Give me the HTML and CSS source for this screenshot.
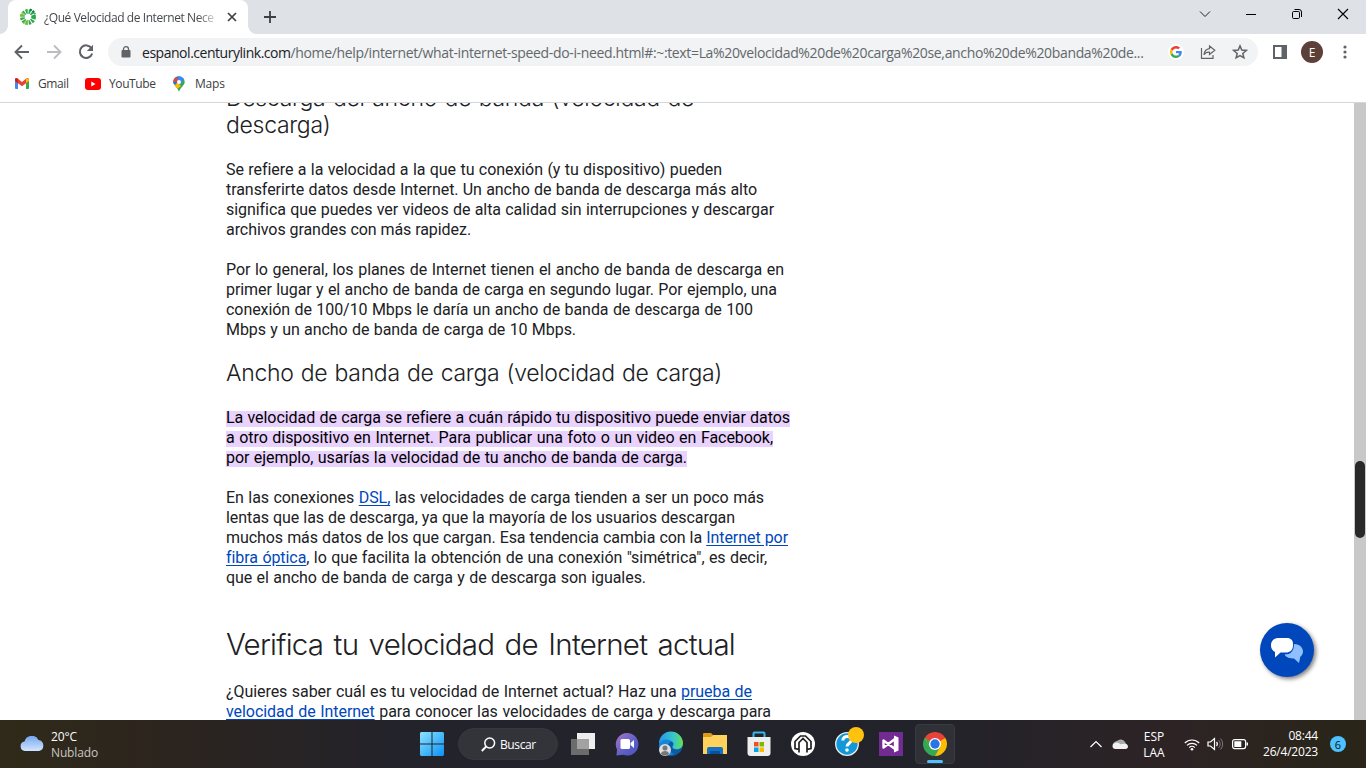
FILE: index.html
```html
<!DOCTYPE html>
<html lang="es">
<head>
<meta charset="utf-8">
<title>¿Qué Velocidad de Internet Necesito?</title>
<link rel="stylesheet" href="styles.css">
</head>
<body>
<div class="tabstrip">
  <div class="tab">
    <svg class="favicon" width="18" height="18" viewBox="-9 -9 18 18"><circle r="5.6" fill="none" stroke="#2aa84a" stroke-width="4.6" stroke-dasharray="2 .93"/><path d="M-8 0A8 8 0 0 1-5.500-5.700L-3-3.400A4 4 0 0 0-4 0zM0 8a8 8 0 0 1-5.400-2.200L-3 3.200A4 4 0 0 0 0 4z" fill="#8dc63f" opacity=".65"/><path d="M2-7.500A8 8 0 0 1 7-3" stroke="#008542" stroke-width="2" stroke-dasharray="2 1" fill="none"/></svg>
    <span class="tab-title">¿Qué Velocidad de Internet Nece</span>
    <svg class="tab-close" width="10" height="10" viewBox="0 0 10 10"><path d="M1 1l8 8M9 1L1 9" stroke="#3c4043" stroke-width="1.7"/></svg>
  </div>
  <svg class="new-tab" width="12" height="12" viewBox="0 0 12 12"><path d="M6 0v12M0 6h12" stroke="#3c4043" stroke-width="1.8"/></svg>
  <div class="window-buttons">
    <svg width="12" height="12" viewBox="0 0 12 12"><path d="M1 3.5l5 5 5-5" fill="none" stroke="#222"/></svg>
    <svg width="12" height="12" viewBox="0 0 12 12"><path d="M1 6.5h10" stroke="#000"/></svg>
    <svg width="12" height="12" viewBox="0 0 12 12"><rect x="1.5" y="3.5" width="7" height="7" rx="1.2" fill="none" stroke="#000"/><path d="M3.5 1.5H8a2.5 2.5 0 0 1 2.5 2.5v5" fill="none" stroke="#000"/></svg>
    <svg width="12" height="12" viewBox="0 0 12 12"><path d="M1 1l10 10M11 1L1 11" stroke="#000" stroke-width="1.1"/></svg>
  </div>
</div>
<div class="toolbar">
  <svg class="nav back" width="16" height="16" viewBox="0 0 16 16"><path d="M15 8H2M8 1.5L1.5 8 8 14.5" fill="none" stroke="#5f6368" stroke-width="1.9"/></svg>
  <svg class="nav forward" width="16" height="16" viewBox="0 0 16 16"><path d="M1 8h13M8 1.5L14.5 8 8 14.5" fill="none" stroke="#bbbdc0" stroke-width="1.9"/></svg>
  <svg class="nav reload" width="16" height="16" viewBox="0 0 16 16"><path d="M13.5 4.3A6.3 6.3 0 1 0 14.2 9.5" fill="none" stroke="#5f6368" stroke-width="2"/><path d="M15 .8V7H8.8z" fill="#5f6368"/></svg>
  <div class="omnibox">
    <svg class="lock" width="10" height="12" viewBox="0 0 10 12"><rect x=".5" y="4" width="9" height="7.5" rx="1" fill="#5f6368"/><path d="M2.5 4.5V3a2.5 2.3 0 0 1 5 0v1.5" fill="none" stroke="#5f6368" stroke-width="1.3"/></svg>
    <span class="url"><b>espanol.centurylink.com</b>/home/help/internet/what-internet-speed-do-i-need.html#:~:text=La%20velocidad%20de%20carga%20se,ancho%20de%20banda%20de...</span>
    <span class="google"><svg width="12" height="12" viewBox="0 0 48 48"><path fill="#ea4335" d="M24 9.500c3.540 0 6.710 1.220 9.210 3.600l6.850-6.850C35.900 2.380 30.470 0 24 0 14.620 0 6.510 5.380 2.560 13.220l7.980 6.190C12.430 13.720 17.740 9.500 24 9.500z"/><path fill="#4285f4" d="M46.980 24.550c0-1.570-.15-3.090-.38-4.550H24v9.020h12.940c-.58 2.960-2.260 5.480-4.780 7.180l7.730 6c4.510-4.180 7.090-10.360 7.090-17.650z"/><path fill="#fbbc05" d="M10.530 28.590A14.500 14.500 0 0 1 10.530 19.410L2.550 13.220A24 24 0 0 0 2.560 34.780z"/><path fill="#34a853" d="M24 48c6.480 0 11.930-2.130 15.890-5.810l-7.730-6c-2.150 1.450-4.920 2.300-8.160 2.300-6.260 0-11.570-4.220-13.470-9.910l-7.980 6.190C6.510 42.620 14.620 48 24 48z"/></svg></span>
    <svg class="share" width="16" height="16" viewBox="0 0 16 16"><path d="M1.500 4v10.300h11.500V11M9.500 2l5.300 4.300-5.300 4.200V8.200C7 8 5.200 8.800 4 10.800 4.300 7.200 6 5 9.500 4.600z" fill="none" stroke="#5f6368" stroke-width="1.200"/></svg>
    <svg class="star" width="16" height="16" viewBox="0 0 16 16"><path d="M8 1.900l1.750 4.200 4.450.35-3.400 2.950 1.050 4.400L8 11.500l-3.850 2.300 1.050-4.400L1.800 6.450l4.450-.35z" fill="none" stroke="#5f6368" stroke-width="1.500"/></svg>
  </div>
  <svg class="panel-icon" width="14" height="14" viewBox="0 0 14 14"><path d="M1 1h12v12H1z" fill="none" stroke="#5f6368" stroke-width="2"/><path d="M8.500 0H14v14H8.500z" fill="#5f6368"/></svg>
  <span class="avatar">E</span>
  <svg class="more" width="4" height="14" viewBox="0 0 4 14"><g fill="#5f6368"><circle cx="2" cy="2" r="1.600"/><circle cx="2" cy="7" r="1.600"/><circle cx="2" cy="12" r="1.600"/></g></svg>
</div>
<div class="bookmarks">
  <svg width="14" height="11" viewBox="0 0 14 11"><path d="M0 1.500h3V11H1a1 1 0 0 1-1-1z" fill="#4285f4"/><path d="M11 1.500h3V10a1 1 0 0 1-1 1h-2z" fill="#34a853"/><path d="M0 1.500C0 .2 1.600-.4 2.700.6L7 4l4.300-3.400C12.400-.4 14 .2 14 1.500V3L7 8.200 0 3z" fill="#ea4335"/><path d="M11 .9C12.400-.4 14 .2 14 1.500V3l-3 2.300z" fill="#fbbc04"/><path d="M0 1.500C0 .2 1.600-.4 3 .9v4.400L0 3z" fill="#c5221f"/></svg>
  <span class="gmail">Gmail</span>
  <svg width="16" height="12" viewBox="0 0 16 12"><rect width="16" height="12" rx="3" fill="red"/><path d="M6.300 3.500v5L10.500 6z" fill="#fff"/></svg>
  <span class="youtube">YouTube</span>
  <svg width="12" height="16" viewBox="0 0 12 16"><clipPath id="pin"><path d="M6 .3A5.700 5.700 0 0 0 .3 6C.3 9.500 4.500 11 6 15.800 7.500 11 11.700 9.500 11.700 6A5.700 5.700 0 0 0 6 .3z"/></clipPath><g clip-path="url(#pin)"><path fill="#34a853" d="M0 0h12v16H0z"/><path fill="#fbbc04" d="M0 5l5 2 3 3-5 4-3-3z"/><path fill="#1a73e8" d="M0 0h5l1 5-4 4L0 7z"/><path fill="#ea4335" d="M0 0v5l4 2 3-4z"/><path fill="#4285f4" d="M5 0h7v3L7 8 4 6z"/></g><circle cx="6" cy="6" r="2" fill="#fff"/></svg>
  <span class="maps">Maps</span>
</div>
<div class="viewport">
  <main class="article">
    <h3 class="clipped"><span class="line" style="width:468px">Descarga del ancho de banda (velocidad de</span><span class="line" style="width:106px">descarga)</span></h3>
    <p><span class="line" style="width:496px">Se refiere a la velocidad a la que tu conexión (y tu dispositivo) pueden</span><span class="line" style="width:531px">transferirte datos desde Internet. Un ancho de banda de descarga más alto</span><span class="line" style="width:548px">significa que puedes ver videos de alta calidad sin interrupciones y descargar</span><span class="line" style="width:245px">archivos grandes con más rapidez.</span></p>
    <p><span class="line" style="width:558px">Por lo general, los planes de Internet tienen el ancho de banda de descarga en</span><span class="line" style="width:551px">primer lugar y el ancho de banda de carga en segundo lugar. Por ejemplo, una</span><span class="line" style="width:527px">conexión de 100/10 Mbps le daría un ancho de banda de descarga de 100</span><span class="line" style="width:350px">Mbps y un ancho de banda de carga de 10 Mbps.</span></p>
    <h3><span class="line" style="width:496px">Ancho de banda de carga (velocidad de carga)</span></h3>
    <p class="marked"><span class="line" style="width:564px">La velocidad de carga se refiere a cuán rápido tu dispositivo puede enviar datos</span><span class="line" style="width:547px">a otro dispositivo en Internet. Para publicar una foto o un video en Facebook,</span><span class="line" style="width:461px">por ejemplo, usarías la velocidad de tu ancho de banda de carga.</span></p>
    <p><span class="line" style="width:538px">En las conexiones <a>DSL,</a> las velocidades de carga tienden a ser un poco más</span><span class="line" style="width:509px">lentas que las de descarga, ya que la mayoría de los usuarios descargan</span><span class="line" style="width:562px">muchos más datos de los que cargan. Esa tendencia cambia con la <a>Internet por</a></span><span class="line" style="width:541px"><a>fibra óptica</a>, lo que facilita la obtención de una conexión "simétrica", es decir,</span><span class="line" style="width:420px">que el ancho de banda de carga y de descarga son iguales.</span></p>
    <h2><span class="line" style="width:509px">Verifica tu velocidad de Internet actual</span></h2>
    <p><span class="line" style="width:526px">¿Quieres saber cuál es tu velocidad de Internet actual? Haz una <a>prueba de</a></span><span class="line" style="width:545px"><a>velocidad de Internet</a> para conocer las velocidades de carga y descarga para</span></p>
  </main>
  <div class="chat"><svg width="34" height="26" viewBox="0 0 34 26"><path d="M24 7c5 0 9 3 9 7.500 0 2.200-1 4-2.700 5.300L29 26l-5-4.500c-4 0-8-1-9.500-4 6 0 9.500-3 9.500-10.500z" fill="#8ebfff"/><path d="M9 1h8c4 0 6 2.500 6 6v1.500c0 4.500-3 7-7 7h-5.500L5 20.500V15C2.300 13.500 1 11.500 1 8.500 1 3.500 4 1 9 1z" fill="#fff"/></svg></div>
  <div class="scrollbar"><div class="thumb"></div></div>
</div>
<div class="taskbar">
  <div class="weather">
    <svg width="25" height="16" viewBox="0 0 25 16"><defs><linearGradient id="cloud" x2="0" y2="1"><stop stop-color="#72a5ef"/><stop offset="1" stop-color="#d5e5ff"/></linearGradient></defs><path d="M5 15a4.800 4.800 0 0 1-.5-9.500A7.500 7.500 0 0 1 18.500 4 5.600 5.600 0 0 1 19 15z" fill="url(#cloud)"/><path d="M9 6c3 0 4 1 6 3" stroke="#a9c9fb" fill="none"/></svg>
    <div class="weather-text"><span>20°C</span><span class="dim">Nublado</span></div>
  </div>
  <div class="apps">
    <svg width="24" height="24" viewBox="0 0 24 24"><defs><linearGradient id="win" x2="1" y2="1"><stop stop-color="#8be4ff"/><stop offset="1" stop-color="#0b91f5"/></linearGradient></defs><path d="M1 0h10.500v11.500H0V1zM12.500 0H23l1 1v10.500H12.500zM0 12.500h11.500V24H1l-1-1zM12.500 12.500H24V23l-1 1H12.500z" fill="url(#win)"/></svg>
    <div class="search"><svg width="15" height="15" viewBox="0 0 15 15"><circle cx="8.700" cy="6" r="4.900" fill="none" stroke="#fff" stroke-width="1.500"/><path d="M5.200 9.500L.8 14" stroke="#fff" stroke-width="1.900"/></svg><span>Buscar</span></div>
    <svg class="app" width="24" height="24" viewBox="0 0 24 24"><path d="M6 1h18v16H6z" fill="#eee"/><path d="M0 7h18v16H0z" fill="#6c6c6c"/><path d="M6 7h12v10H6z" fill="#a2a2a2"/></svg>
    <svg class="app" width="24" height="24" viewBox="0 0 24 24"><defs><linearGradient id="teams" x2="1" y2="1"><stop stop-color="#a875c2"/><stop offset=".6" stop-color="#5b5fc7"/><stop offset="1" stop-color="#4c50bd"/></linearGradient></defs><path d="M12 1a11.300 11.300 0 1 1-4 21.800L1.500 23.500 2 17.500A11.300 11.300 0 0 1 12 1z" fill="url(#teams)"/><rect x="5.500" y="7" width="9.500" height="10" rx="1.500" fill="#fff"/><path d="M15.500 11L19 8v8l-3.500-3z" fill="#fff"/></svg>
    <svg class="app edge" width="26" height="26" viewBox="0 0 26 26"><defs><linearGradient id="edge"><stop stop-color="#2796e8"/><stop offset=".6" stop-color="#36c6cc"/><stop offset="1" stop-color="#67e052"/></linearGradient></defs><circle cx="13" cy="13" r="12" fill="#0c5ba8"/><path d="M1 13A12 12 0 0 1 25 12c0 5-4 7-8 6-3-.8-3-2-1.500-4.500C16 9 6 7 1 13z" fill="url(#edge)"/><path d="M1 14C3 8 11 7 13 11c-4 1-4 9 3 12C8 27 1 21 1 14z" fill="#1685d9"/><circle cx="7" cy="19" r="6" fill="#ddd"/><circle cx="7" cy="17" r="2.500" fill="#777"/><path d="M3 23c0-4 8-4 8 0-2 2-6 2-8 0z" fill="#777"/></svg>
    <svg class="app" width="24" height="24" viewBox="0 0 24 24"><path d="M0 2q0-1 1-1h7l2 2-2 4H0z" fill="#dc9b17"/><path d="M0 5h8l2-2h14v19H0z" fill="#ffd35b"/><path d="M4 22v-5q0-2 2-2h12q2 0 2 2v5z" fill="#1472c4"/><path d="M7 19h10v3H7z" fill="#0b4f9d"/></svg>
    <svg class="app" width="24" height="26" viewBox="0 0 24 26"><path d="M6.500 8V2.500q0-1 1-1h9q1 0 1 1V8" fill="none" stroke="#36b7ec" stroke-width="2"/><path d="M.5 6h23v16q0 3-3 3h-17q-3 0-3-3z" fill="#eee"/><path d="M7 11h4.500v4.500H7z" fill="#f25022"/><path d="M12.500 11H17v4.500h-4.500z" fill="#7fba00"/><path d="M7 16.500h4.500V21H7z" fill="#00a4ef"/><path d="M12.500 16.500H17V21h-4.500z" fill="#ffb900"/></svg>
    <svg class="app" width="24" height="24" viewBox="0 0 24 24"><circle cx="12" cy="12" r="12" fill="#fff"/><path d="M8 20.500v-3l-4-1V9.500L9.500 4h5L20 9.500v7l-4 1v3M8 18v-7.500l4-4 4 4V18" fill="none" stroke="#222" stroke-width="1.700"/></svg>
    <svg class="app help" width="30" height="30" viewBox="0 0 30 30"><circle cx="13" cy="17" r="11.300" fill="#1298d8" stroke="#eee" stroke-width="1.300"/><path d="M8.800 13.500c.2-5.500 8.700-5 8.500-.5 0 3-4.300 3.500-4.300 6.500" fill="none" stroke="#fff" stroke-width="3"/><circle cx="13" cy="23" r="1.800" fill="#fff"/><circle cx="22" cy="8" r="8" fill="#ffc20e"/></svg>
    <svg class="app vs" width="24" height="24" viewBox="0 0 24 24"><path d="M0 0h24v24H0z" fill="#712b91"/><path d="M4.500 8.500v7L16 7v10z" fill="none" stroke="#fff" stroke-width="2.400" stroke-linejoin="round"/><path d="M15 3.500l4.500 2v13l-4.500 2z" fill="#fff"/></svg>
    <div class="chrome-tile"><svg width="24" height="24" viewBox="0 0 24 24"><path d="M12 12L1.610 6A12 12 0 0 1 22.390 6z" fill="#ea4335"/><path d="M12 12L22.390 6A12 12 0 0 1 12 24z" fill="#fbbc04"/><path d="M12 12v12A12 12 0 0 1 1.610 6z" fill="#34a853"/><path d="M12 6h10.390L17.200 15 12 24l5-10zM1.610 6l5.200 9L12 12z" fill="#fbbc04"/><path d="M1.610 6l5.200 9L12 12z" fill="#34a853"/><path d="M12 24l5.200-9L12 12z" fill="#34a853"/><path d="M12 6h10.390L12 12z" fill="#ea4335"/><circle cx="12" cy="12" r="6" fill="#fff"/><circle cx="12" cy="12" r="4.700" fill="#2b73e8"/></svg></div>
  </div>
  <div class="tray">
    <svg class="chevron" width="12" height="8" viewBox="0 0 12 8"><path d="M.5 7L6 1.500 11.500 7" fill="none" stroke="#fff" stroke-width="1.200"/></svg>
    <svg class="onedrive" width="16" height="12" viewBox="0 0 16 12"><path d="M1 8A5 5 0 0 1 5 3 5 5 0 0 1 13 4l2 3z" fill="#aaa"/><path d="M3.500 11a3 3 0 0 1 0-6c2-1 3 0 5 1.200C11 5.500 16 5 16 8.500c0 1.500-1 2.500-2.500 2.500z" fill="#f1f1f1"/></svg>
    <div class="lang"><span>ESP</span><span>LAA</span></div>
    <svg class="wifi" width="16" height="13" viewBox="0 0 16 13"><path d="M.8 5a10.200 10.200 0 0 1 14.400 0M3 7.400a7 7 0 0 1 10 0M5.200 9.600a4 4 0 0 1 5.600 0" fill="none" stroke="#fff" stroke-width="1.200"/><circle cx="8" cy="11.300" r="1.300" fill="#fff"/></svg>
    <svg class="sound" width="17" height="14" viewBox="0 0 17 14"><path d="M1 5h2.500L7.500 1.500v11L3.500 9H1z" fill="none" stroke="#fff" stroke-width="1.200"/><path d="M9.500 5a3 3 0 0 1 0 4" fill="none" stroke="#fff" stroke-width="1.200"/><path d="M11.500 3a5.500 5.500 0 0 1 0 8M13.500 1.500a8 8 0 0 1 0 11" fill="none" stroke="#777"/></svg>
    <svg class="battery" width="17" height="11" viewBox="0 0 17 11"><rect x=".6" y=".6" width="13" height="9" rx="2" fill="none" stroke="#fff" stroke-width="1.200"/><path d="M2.300 2.300h7v5.600h-7zM14.500 3.500H16v3h-1.500z" fill="#fff"/></svg>
    <div class="clock"><span>08:44</span><span>26/4/2023</span></div>
    <span class="count">6</span>
  </div>
</div>
</body>
</html>
```
FILE: styles.css
```css
* { box-sizing: border-box; }
body { margin: 0; width: 1366px; height: 768px; overflow: hidden; display: flex; flex-direction: column; background: #fff; font-family: "Open Sans", "Noto Sans", sans-serif; font-size: 12px; }
svg { display: block; flex: none; }

.tabstrip { height: 34px; background: #dee1e6; display: flex; align-items: flex-end; flex: none; padding-left: 8px; }
.tab { position: relative; width: 240px; height: 34px; background: #fff; border-radius: 8px 8px 0 0; display: flex; align-items: center; padding: 0 12px 0 11px; }
.tab::before, .tab::after { content: ""; position: absolute; bottom: 0; width: 8px; height: 8px; }
.tab::before { left: -8px; background: radial-gradient(circle at 0 0, transparent 7.5px, #fff 8px); }
.tab::after { right: -8px; background: radial-gradient(circle at 100% 0, transparent 7.5px, #fff 8px); }
.tab-title { flex: none; margin-left: 7px; width: 176px; overflow: hidden; white-space: nowrap; color: #45494d; letter-spacing: -.42px; mask-image: linear-gradient(90deg, #000 87%, transparent); }
.tab-close { margin-left: 7px; }
.new-tab { margin: 0 0 11px 16px; }
.window-buttons { margin-left: auto; display: flex; gap: 34px; padding: 0 17px 14px 0; }

.toolbar { height: 36px; display: flex; align-items: center; flex: none; padding-left: 14px; }
.forward, .reload { margin-left: 16px; }
.omnibox { margin-left: 14px; width: 1150px; height: 28px; border-radius: 14px; background: #f1f3f4; display: flex; align-items: center; padding: 0 10px 0 13px; }
.url { margin-left: 11px; width: 1024px; color: #63676b; font-size: 14px; letter-spacing: -.35px; white-space: nowrap; }
.url b { font-weight: 400; color: #202124; letter-spacing: -.47px; }
.google { width: 16px; height: 16px; border-radius: 8px; background: #fff; display: grid; place-items: center; flex: none; margin-left: 2px; }
.share, .star { margin-left: 16px; }
.panel-icon { margin-left: 15px; }
.avatar { margin-left: 14px; width: 22px; height: 22px; border-radius: 11px; background: #5d4037; color: #fff; display: grid; place-items: center; font-size: 12px; }
.more { margin-left: 20px; }

.bookmarks { height: 33px; flex: none; border-bottom: 1px solid #d5d7da; display: flex; align-items: center; padding: 0 0 5px 15px; color: #3c4043; }
.bookmarks span { white-space: nowrap; letter-spacing: -.4px; }
.bookmarks .maps { letter-spacing: -.2px; }
.gmail { margin-left: 9px; width: 47px; }
.youtube { margin-left: 8px; width: 64px; }
.maps { margin-left: 10px; }

.viewport { position: relative; height: 617px; flex: none; overflow: hidden; display: flex; justify-content: space-between; }
.article { margin-left: 226px; width: 600px; color: #202124; font-family: Roboto, sans-serif; font-size: 16px; line-height: 20px; letter-spacing: -.06px; }
.line { display: block; white-space: nowrap; text-align: justify; text-align-last: justify; }
.article p { margin: 0 0 20px; }
.article h3 { margin: 0 0 20px; font-family: Inter, Roboto, sans-serif; font-size: 23px; line-height: 27px; font-weight: 350; letter-spacing: -.3px; padding-bottom: 1px; }
.article .clipped { margin-top: -18px; }
.article h2 { margin: 36px 0 18px; font-family: Inter, Roboto, sans-serif; font-size: 29.5px; line-height: 40px; font-weight: 350; letter-spacing: -.75px; }
.marked { color: #000; }
.marked .line { background: linear-gradient(#e9d2fd, #e9d2fd) 0 3px / 100% 16px no-repeat; }
.article a { color: #0047bb; text-decoration: underline; text-underline-offset: 2px; }
.chat { position: absolute; left: 1260px; top: 520px; width: 54px; height: 54px; border-radius: 50%; background: #0047bb; box-shadow: 2px 2px 4px rgba(0,0,0,.5); display: grid; place-items: center; }
.scrollbar { width: 12px; background: #c8c8c8; padding-top: 358px; }
.thumb { width: 10px; height: 77px; margin-left: 1px; border-radius: 5px; background: #292929; }

.taskbar { height: 48px; flex: none; display: flex; align-items: center; position: relative; color: #fff; background: linear-gradient(90deg, #302a1a, #2c241e 12%, #23232c 30%, #22232a 68%, #2d2325 86%, #292618); }
.weather { display: flex; align-items: center; padding-left: 20px; width: 420px; }
.weather-text { margin-left: 6px; padding-top: 2px; display: flex; flex-direction: column; line-height: 16px; letter-spacing: -.15px; }
.dim { color: #c9c6c3; }
.apps { display: flex; align-items: center; height: 48px; }
.search { margin-left: 14px; margin-right: -7px; width: 100px; height: 32px; border-radius: 16px; background: #33343a; border: 1px solid #38393f; display: flex; align-items: center; padding-left: 22px; gap: 4px; }
.search span { letter-spacing: -.4px; }
.app { margin-left: 20px; }
.app.edge { margin: 0 -1px 0 19px; }
.app.help { margin: -4px -6px 0 19px; }
.app.vs { margin-left: 21px; }
.chrome-tile { position: relative; width: 40px; height: 40px; margin-left: 12px; border-radius: 4px; background: #303137; border: 1px solid #3a3b40; display: grid; place-items: center; }
.chrome-tile::after { content: ""; position: absolute; left: 11px; bottom: 0; width: 16px; height: 3px; border-radius: 2px; background: #4cc2ff; }
.tray { margin-left: auto; display: flex; align-items: center; padding-right: 20px; }
.onedrive { margin-left: 10px; }
.lang { margin-left: 15px; width: 22px; padding-top: 2px; display: flex; flex-direction: column; align-items: center; line-height: 16px; }
.wifi { margin-left: 19px; }
.sound { margin-left: 7px; }
.battery { margin-left: 8px; }
.clock { width: 69px; display: flex; flex-direction: column; align-items: flex-end; line-height: 16px; letter-spacing: -.2px; }
.count { margin-left: 12px; width: 16px; height: 16px; border-radius: 8px; background: #4cc2ff; color: #111; display: grid; place-items: center; font-size: 11px; }
```
